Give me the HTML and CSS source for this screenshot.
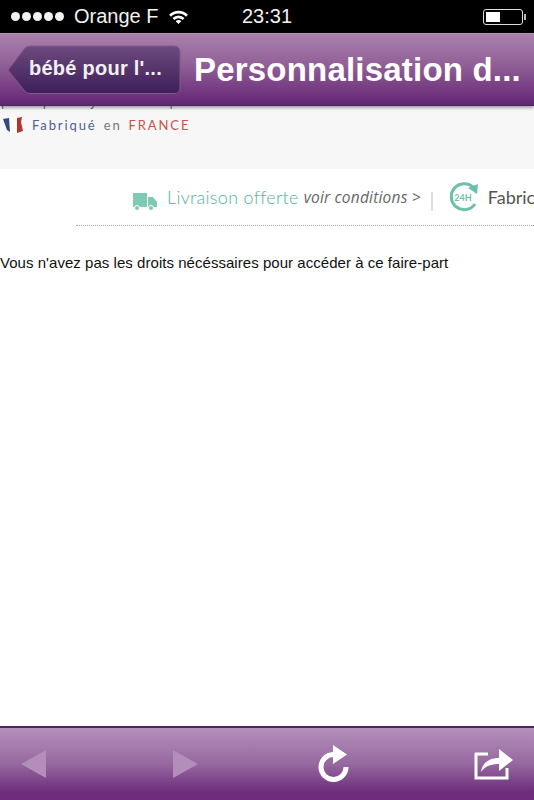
FILE: index.html
```html
<!DOCTYPE html>
<html lang="fr">
<head>
    <meta charset="UTF-8">
    <meta name="viewport" content="width=device-width, initial-scale=1.0">
    <title>Personnalisation du faire-part</title>
    <link rel="stylesheet" href="styles.css">
</head>
<body>
    <div class="status-bar">
        <div class="status-left">
            <div class="signal"><span></span><span></span><span></span><span></span><span></span></div>
            <span class="carrier">Orange F</span>
            <svg class="wifi" width="21" height="15" viewBox="0 0 22 16">
                <path d="M1 6 A14 14 0 0 1 21 6 L19 8.2 A11 11 0 0 0 3 8.2 Z" fill="#fff"/>
                <path d="M4.6 9.6 A9 9 0 0 1 17.4 9.6 L15.4 11.7 A6.2 6.2 0 0 0 6.6 11.7 Z" fill="#fff"/>
                <path d="M8 13 A4 4 0 0 1 14 13 L11 16 Z" fill="#fff"/>
            </svg>
        </div>
        <div class="clock">23:31</div>
        <div class="battery"><div class="battery-level"></div></div>
    </div>

    <div class="nav-bar">
        <svg class="back-button" width="175" height="50" viewBox="0 0 175 50">
            <defs>
                <linearGradient id="backFill" x1="0" y1="0" x2="0" y2="1">
                    <stop offset="0" stop-color="#6d4a80"/>
                    <stop offset="0.5" stop-color="#54346a"/>
                    <stop offset="1" stop-color="#3f1f58"/>
                </linearGradient>
            </defs>
            <path d="M1 25 L18 3 Q20 1 24 1 L167 1 Q173 1 173 7 L173 43 Q173 48.500 167 48.500 L24 48.500 Q20 48.500 18 46.500 Z" fill="url(#backFill)" stroke="#7d5a90" stroke-width="1"/>
        </svg>
        <span class="back-label">bébé pour l'...</span>
        <h1 class="nav-title">Personnalisation d...</h1>
    </div>

    <div class="page-content">
        <div class="site-banner">
            <div class="banner-slogan">| we print your life |</div>
            <div class="banner-france">
                <svg width="22" height="18" viewBox="0 0 22 18">
                    <path d="M1 3 L7 2 L8 16 L5 14 Z" fill="#2f4a86"/>
                    <path d="M8 1 L14 2 L14 17 L8 17 Z" fill="#fff"/>
                    <path d="M15 2 L20 1 L19 6 L21 15 L15 17 Z" fill="#b5342d"/>
                </svg>
                <span class="france-blue">Fabriqué</span>
                <span class="france-grey">en</span>
                <span class="france-red">FRANCE</span>
            </div>
        </div>

        <div class="promo-row">
            <svg class="truck-icon" width="24" height="19" viewBox="0 0 24 19">
                <path d="M0 1 H14 V15 H0 Z M15 5 H20 L24 10 V15 H15 Z" fill="#7fcab5"/>
                <circle cx="4" cy="16" r="2.500" fill="#7fcab5" stroke="#fff"/>
                <circle cx="18" cy="16" r="2.500" fill="#7fcab5" stroke="#fff"/>
            </svg>
            <span class="promo-title">Livraison offerte</span>
            <span class="promo-link">voir conditions &gt;</span>
            <span class="promo-sep"></span>
            <svg class="clock-icon" width="32" height="32" viewBox="0 0 32 32">
                <path d="M26 7 A13 13 0 1 0 27 23" fill="none" stroke="#6cc0ab" stroke-width="3"/>
                <path d="M20 7 L30 3 L29 13 Z" fill="#6cc0ab"/>
                <text x="15" y="19.500" class="clock-icon-text">24H</text>
            </svg>
            <span class="promo-fab">Fabrication en 24h</span>
        </div>

        <p class="error-text">Vous n'avez pas les droits nécéssaires pour accéder à ce faire-part</p>
    </div>

    <div class="tool-bar">
        <svg class="tool-back" width="26" height="28" viewBox="0 0 26 28"><path d="M25 0 V28 L0 14 Z" fill="#b48ebb"/></svg>
        <svg class="tool-forward" width="26" height="28" viewBox="0 0 26 28"><path d="M0 0 V28 L25 14 Z" fill="#b48ebb"/></svg>
        <svg class="tool-reload" width="32" height="38" viewBox="0 0 32 38">
            <path d="M28 22 A12.500 12.500 0 1 1 15 9.500" fill="none" stroke="#fff" stroke-width="5"/>
            <path d="M15 0 L29 9.500 L15 19 Z" fill="#fff"/>
        </svg>
        <svg class="tool-share" width="40" height="32" viewBox="0 0 40 32">
            <path d="M1 6 H14 M2 5 V30 H33 V20" fill="none" stroke="#fff" stroke-width="3"/>
            <path d="M7 24 C8 15 15 10 25 10 V1 L39 12 L25 23 V16 C17 16 11 18 7 24 Z" fill="#fff"/>
        </svg>
    </div>
</body>
</html>
```

FILE: styles.css
```css
/* Base */
* {
    margin: 0;
    padding: 0;
    box-sizing: border-box;
}

body {
    width: 534px;
    height: 800px;
    display: flex;
    flex-direction: column;
    overflow: hidden;
    background: #fff;
    font-family: 'Liberation Sans', Arial, sans-serif;
}

/* Status bar */
.status-bar {
    height: 33px;
    flex-shrink: 0;
    background: #000;
    color: #f2f2f2;
    display: grid;
    grid-template-columns: 1fr auto 1fr;
    align-items: center;
    padding: 0 11px;
    font-size: 20px;
}

.status-left {
    display: flex;
    align-items: center;
}

.signal {
    display: flex;
    gap: 2px;
}

.signal span {
    width: 9px;
    height: 9px;
    border-radius: 50%;
    background: #f2f2f2;
}

.carrier {
    margin-left: 10px;
}

.wifi {
    margin-left: 10px;
}

.battery {
    justify-self: end;
    position: relative;
    width: 40px;
    height: 16px;
    padding: 2px;
    border: 1px solid #ddd;
    border-radius: 3px;
}

.battery::after {
    content: "";
    position: absolute;
    right: -4px;
    top: 4px;
    width: 2px;
    height: 6px;
    background: #bbb;
}

.battery-level {
    width: 14px;
    height: 100%;
    background: #fff;
}

/* Nav bar */
.nav-bar {
    position: relative;
    height: 73px;
    flex-shrink: 0;
    display: flex;
    align-items: center;
    padding-left: 194px;
    background: linear-gradient(#ab80ad, #8f5e96 45%, #6b2d7a 92%, #5d2a6c);
    border-top: 1px solid #b594ba;
    border-bottom: 1px solid #4e2560;
    box-shadow: 0 2px 3px rgba(0, 0, 0, 0.35);
    z-index: 1;
}

.back-button {
    position: absolute;
    left: 7px;
    top: 11px;
}

.back-label {
    position: absolute;
    left: 29px;
    top: 23px;
    color: #f4eff6;
    font-size: 20px;
    font-weight: 700;
    letter-spacing: 0.25px;
}

.nav-title {
    color: #fff;
    font-size: 33px;
    font-weight: 700;
    white-space: nowrap;
    letter-spacing: 0.2px;
}

/* Page content */
.page-content {
    flex-grow: 1;
    overflow: hidden;
}

.site-banner {
    height: 63px;
    background: #f7f7f7;
    overflow: hidden;
}

.banner-slogan {
    margin-top: -11px;
    height: 13px;
    padding-left: 1px;
    font-size: 12px;
    letter-spacing: 3.4px;
    white-space: nowrap;
    color: #666;
}

.banner-france {
    display: flex;
    align-items: center;
    gap: 7px;
    margin-top: 8px;
    padding-left: 2px;
    font-family: 'Lato', sans-serif;
    font-size: 13px;
    letter-spacing: 1.9px;
}

.banner-france svg {
    margin-right: 1px;
}

.france-blue { color: #4d5f8f; }
.france-grey { color: #777; }
.france-red { color: #c9524b; }

.promo-row {
    display: flex;
    align-items: center;
    height: 57px;
    margin-left: 76px;
    padding-left: 57px;
    border-bottom: 1px dotted #aaa;
    white-space: nowrap;
    overflow: hidden;
}

.truck-icon {
    flex-shrink: 0;
    margin-top: 8px;
}

.promo-title {
    margin-left: 10px;
    color: #4fb39a;
    font-family: 'Lato', sans-serif;
    font-size: 18px;
    font-weight: 300;
    letter-spacing: 0.3px;
}

.promo-link {
    margin-left: 5px;
    color: #666;
    font-family: 'Open Sans', sans-serif;
    font-size: 15.500px;
    font-style: italic;
    letter-spacing: 0.2px;
}

.promo-sep {
    flex-shrink: 0;
    width: 2px;
    height: 19px;
    margin: 8px 0 0 10px;
    background: #ddd;
}

.clock-icon {
    flex-shrink: 0;
    margin-left: 15px;
}

.clock-icon-text {
    fill: #6cc0ab;
    font-family: 'Lato', sans-serif;
    font-size: 9px;
    font-weight: 700;
    text-anchor: middle;
}

.promo-fab {
    margin-left: 8px;
    color: #555;
    font-family: 'Lato', sans-serif;
    font-size: 18px;
}

.error-text {
    margin-top: 28px;
    font-size: 15px;
    letter-spacing: 0.04px;
    color: #111;
}

/* Bottom toolbar */
.tool-bar {
    height: 74px;
    flex-shrink: 0;
    display: flex;
    align-items: center;
    padding-left: 21px;
    background: linear-gradient(#b490bb, #96689f 50%, #6d2c7c 90%);
    border-top: 2px solid #4e2560;
}

.tool-forward { margin-left: 126px; }
.tool-reload { margin-left: 119px; }
.tool-share { margin-left: 124px; }
```
